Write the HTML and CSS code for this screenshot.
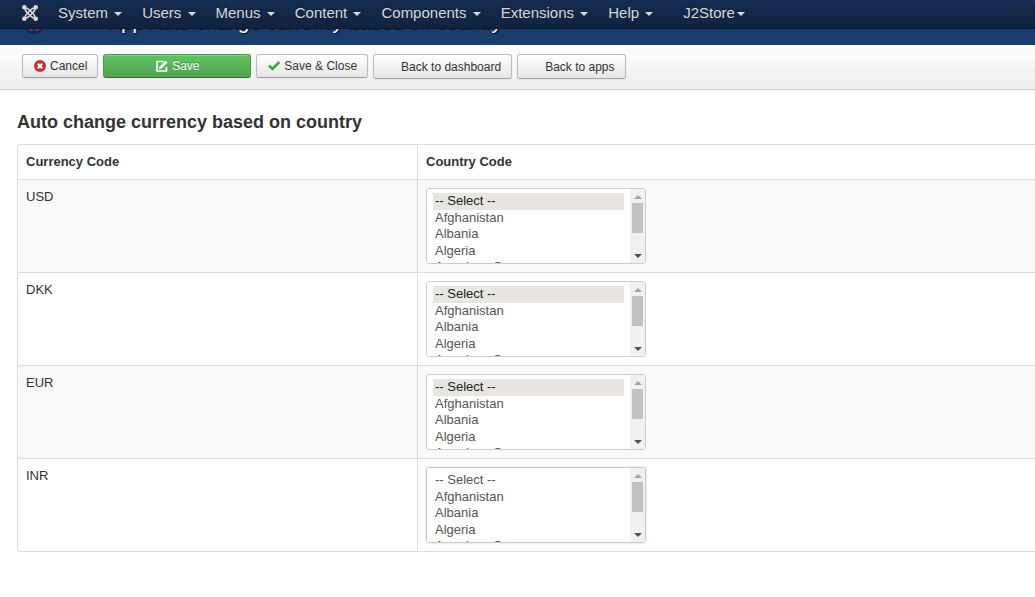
FILE: index.html
```html
<!DOCTYPE html>
<html lang="en">
<head>
<meta charset="utf-8">
<title>Auto change currency based on country</title>
<link rel="stylesheet" href="styles.css">
</head>
<body>
<nav class="navbar" aria-label="Main">
  <a class="brand" href="#" aria-label="Home">
    <svg viewBox="0 0 16 16" width="16" height="16" fill="none" stroke="currentColor">
      <g stroke-width="1.700">
        <path d="M3 3Q3 5.500 5 7.500L8.500 11"/>
        <path d="M3 3Q5.500 3 7.500 5L11 8.500"/>
        <path d="M13 3Q10.500 3 8.500 5L5 8.500"/>
        <path d="M13 3Q13 5.500 11 7.500L7.500 11"/>
        <path d="M3 13Q3 10.500 5 8.500"/>
        <path d="M3 13Q5.500 13 7.500 11"/>
        <path d="M13 13Q13 10.500 11 8.500"/>
        <path d="M13 13Q10.500 13 8.500 11"/>
      </g>
      <g fill="currentColor" stroke="none">
        <circle cx="2.300" cy="2.300" r="2.300"/><circle cx="13.700" cy="2.300" r="2.300"/>
        <circle cx="2.300" cy="13.700" r="2.300"/><circle cx="13.700" cy="13.700" r="2.300"/>
      </g>
    </svg>
  </a>
  <ul class="menu">
    <li><a href="#">System <span class="caret"></span></a></li>
    <li><a href="#">Users <span class="caret"></span></a></li>
    <li><a href="#">Menus <span class="caret"></span></a></li>
    <li><a href="#">Content <span class="caret"></span></a></li>
    <li><a href="#">Components <span class="caret"></span></a></li>
    <li><a href="#">Extensions <span class="caret"></span></a></li>
    <li><a href="#">Help <span class="caret"></span></a></li>
    <li class="menu-extra"><a href="#">J2Store<span class="caret"></span></a></li>
  </ul>
</nav>
<header class="header">
  <svg class="header-logo" viewBox="0 0 24 24" width="24" height="24">
    <circle cx="12" cy="12" r="10.500" fill="#1d3560" stroke="#15233f" stroke-width="2"/>
    <path d="M7 20h3M14 20h3" stroke="#7b2a85" stroke-width="2"/>
  </svg>
  <h1 class="page-title">App Auto change currency based on country</h1>
</header>
<div class="toolbar">
  <button type="button" class="btn">
    <svg class="icon" viewBox="0 0 12 12" width="12" height="12"><circle cx="6" cy="6" r="6" fill="#bd362f"/><path d="M3.800 3.800l4.400 4.400M8.200 3.800l-4.400 4.400" stroke="#fff" stroke-width="2"/></svg>Cancel
  </button>
  <button type="button" class="btn btn-success">
    <svg class="icon" viewBox="0 0 12 12" width="12" height="12" fill="none" stroke="#fff"><path d="M7.500 1.500H1v9.500h9.500V7" stroke-width="1.600"/><path d="M4.500 7.800L10.500 1.500" stroke-width="2.800"/><path d="M3 9.200l.6-3 2.400 2.200z" fill="#fff" stroke="none"/></svg>Save
  </button>
  <button type="button" class="btn">
    <svg class="icon" viewBox="0 0 12 12" width="12" height="12"><path d="M1 5.500l3.500 3.500L11.300 2" fill="none" stroke="#46a546" stroke-width="2.600"/></svg>Save &amp; Close
  </button>
  <button type="button" class="btn btn-back">Back to dashboard</button>
  <button type="button" class="btn btn-back">Back to apps</button>
</div>
<main class="content">
  <h2 class="heading">Auto change currency based on country</h2>
  <table class="table">
    <thead>
      <tr><th class="col-code" scope="col">Currency Code</th><th scope="col">Country Code</th></tr>
    </thead>
    <tbody>
      <tr>
        <td><label for="usd">USD</label></td>
        <td><div class="list-box"><select id="usd" class="list" multiple><option selected>-- Select --</option><option>Afghanistan</option><option>Albania</option><option>Algeria</option><option>American Samoa</option><option>Andorra</option><option>Angola</option><option>Anguilla</option><option>Antarctica</option></select><span class="scrollbar" aria-hidden="true"><i class="arrow-up"></i><i class="thumb"></i><i class="arrow-down"></i></span></div></td>
      </tr>
      <tr>
        <td><label for="dkk">DKK</label></td>
        <td><div class="list-box"><select id="dkk" class="list" multiple><option selected>-- Select --</option><option>Afghanistan</option><option>Albania</option><option>Algeria</option><option>American Samoa</option><option>Andorra</option><option>Angola</option><option>Anguilla</option><option>Antarctica</option></select><span class="scrollbar" aria-hidden="true"><i class="arrow-up"></i><i class="thumb"></i><i class="arrow-down"></i></span></div></td>
      </tr>
      <tr>
        <td><label for="eur">EUR</label></td>
        <td><div class="list-box"><select id="eur" class="list" multiple><option selected>-- Select --</option><option>Afghanistan</option><option>Albania</option><option>Algeria</option><option>American Samoa</option><option>Andorra</option><option>Angola</option><option>Anguilla</option><option>Antarctica</option></select><span class="scrollbar" aria-hidden="true"><i class="arrow-up"></i><i class="thumb"></i><i class="arrow-down"></i></span></div></td>
      </tr>
      <tr>
        <td><label for="inr">INR</label></td>
        <td><div class="list-box"><select id="inr" class="list list-active" multiple><option>-- Select --</option><option>Afghanistan</option><option>Albania</option><option>Algeria</option><option>American Samoa</option><option>Andorra</option><option>Angola</option><option>Anguilla</option><option>Antarctica</option></select><span class="scrollbar" aria-hidden="true"><i class="arrow-up"></i><i class="thumb"></i><i class="arrow-down"></i></span></div></td>
      </tr>
    </tbody>
  </table>
</main>
</body>
</html>
```
FILE: styles.css
```css
* { box-sizing: border-box; }
body {
  margin: 0;
  background: #fff;
  color: #333;
  font: 13px/18px "Liberation Sans", Arial, sans-serif;
}
.navbar {
  position: fixed;
  top: 0;
  left: 0;
  right: 0;
  z-index: 10;
  display: flex;
  align-items: center;
  height: 29px;
  padding: 0 22px 3px;
  background: linear-gradient(#152d53, #10223e);
  border-bottom: 1px solid #0c192e;
}
.brand { display: flex; color: #d9d9d9; }
.menu {
  display: flex;
  margin: 0 0 0 10px;
  padding: 0;
  list-style: none;
}
.menu a {
  display: block;
  padding: 0 10px;
  color: #d9d9d9;
  font-size: 15px;
  line-height: 25px;
  text-decoration: none;
  text-shadow: 0 -1px 0 rgba(0, 0, 0, 0.25);
}
.menu-extra { margin-left: 10px; }
.caret {
  display: inline-block;
  margin-left: 2px;
  vertical-align: middle;
  border: 4px solid transparent;
  border-top-color: currentColor;
  border-bottom: 0;
}
.header {
  display: flex;
  align-items: flex-start;
  gap: 62px;
  height: 45px;
  padding: 10px 22px 0;
  background: linear-gradient(#1a3867, #1a3e6e);
}
.page-title {
  margin: 0;
  color: #fff;
  font-size: 20px;
  font-weight: 400;
  line-height: 24px;
  white-space: nowrap;
  text-shadow: 1px 1px 1px rgba(0, 0, 0, 0.8);
}
.toolbar {
  display: flex;
  align-items: flex-start;
  gap: 5px;
  padding: 9px 22px 10px;
  background: linear-gradient(#fff, #ededed);
  border-bottom: 1px solid #d0d0d0;
}
.btn {
  display: flex;
  align-items: center;
  justify-content: center;
  height: 24px;
  padding: 0 10px 0 11px;
  color: #333;
  font: 12px/22px "Liberation Sans", Arial, sans-serif;
  white-space: nowrap;
  background: linear-gradient(#fff, #e6e6e6);
  border: 1px solid #bbb;
  border-bottom-color: #a2a2a2;
  border-radius: 3px;
  box-shadow: inset 0 1px 0 rgba(255, 255, 255, 0.2), 0 1px 2px rgba(0, 0, 0, 0.05);
}
.icon { margin-right: 4px; }
.btn-success {
  width: 148px;
  color: #fff;
  text-shadow: 0 -1px 0 rgba(0, 0, 0, 0.25);
  background: linear-gradient(#62c462, #51a351);
  border-color: #4a9a4a;
  border-bottom-color: #387038;
}
.btn-back { height: 25px; padding-left: 27px; }
.content { padding: 20px 0 45px 17px; }
.heading {
  margin: 0 0 10px;
  font-size: 18px;
  line-height: 24px;
}
.table {
  width: 100%;
  border: 1px solid #ddd;
  border-right: 0;
  border-radius: 4px 0 0 4px;
  border-spacing: 0;
}
.table th, .table td {
  padding: 8px;
  text-align: left;
  vertical-align: top;
}
.table td { border-top: 1px solid #ddd; }
.table tr > :last-child { border-left: 1px solid #ddd; }
.table tbody tr:nth-child(odd) td { background: #f9f9f9; }
.col-code { width: 399px; }
.list-box { position: relative; width: 220px; }
.list {
  display: block;
  width: 100%;
  height: 76px;
  padding: 4px 21px 4px 6px;
  color: #555;
  font: 13px "Liberation Sans", Arial, sans-serif;
  background: #fff;
  border: 1px solid #ccc;
  border-radius: 3px;
  outline: 0;
  overflow-y: scroll;
  scrollbar-width: none;
}
.list option { box-sizing: content-box; }
.list option:checked {
  color: #222;
  background: #e9e5e1 linear-gradient(#e9e5e1, #e9e5e1);
}
.list-active {
  border-color: #d0c9c3;
  box-shadow: 0 0 2px #d0c9c3;
}
.scrollbar {
  position: absolute;
  top: 1px;
  right: 1px;
  bottom: 1px;
  display: flex;
  flex-direction: column;
  align-items: center;
  width: 15px;
  padding: 6px 0 5px;
  background: #f1f1f1;
  border-radius: 0 2px 2px 0;
  pointer-events: none;
}
.arrow-up, .arrow-down { border: 4px solid transparent; }
.arrow-up { border-top: 0; border-bottom-color: #a3a3a3; }
.arrow-down { margin-top: auto; border-bottom: 0; border-top-color: #505050; }
.thumb { width: 11px; height: 30px; margin-top: 4px; background: #c1c1c1; }
```
